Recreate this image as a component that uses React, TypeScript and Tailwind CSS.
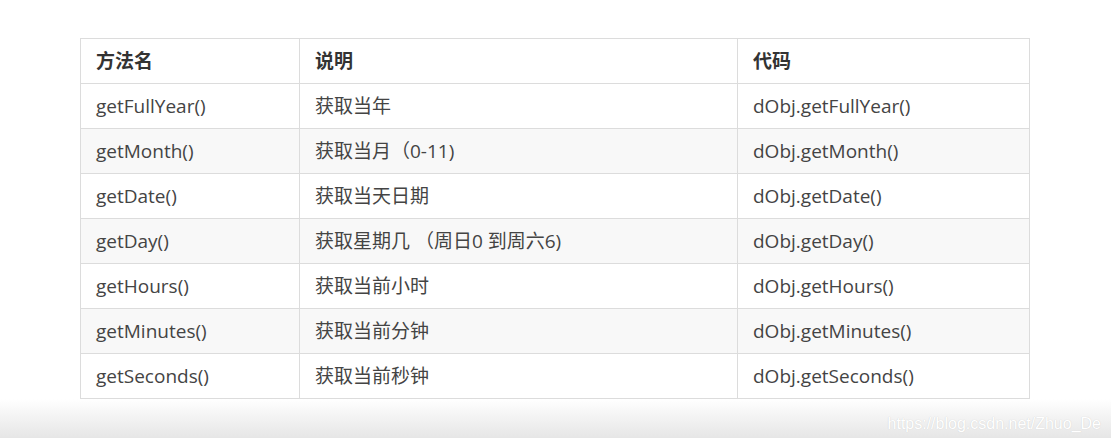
const rows = [
	{ name: "getFullYear()", desc: "获取当年", code: "dObj.getFullYear()" },
	{ name: "getMonth()", desc: "获取当月（0-11)", code: "dObj.getMonth()" },
	{ name: "getDate()", desc: "获取当天日期", code: "dObj.getDate()" },
	{ name: "getDay()", desc: "获取星期几 （周日0 到周六6)", code: "dObj.getDay()" },
	{ name: "getHours()", desc: "获取当前小时", code: "dObj.getHours()" },
	{ name: "getMinutes()", desc: "获取当前分钟", code: "dObj.getMinutes()" },
	{ name: "getSeconds()", desc: "获取当前秒钟", code: "dObj.getSeconds()" },
];

const App = () => {
	return (
		<div
			className="w-[1111px] h-[438px] overflow-hidden bg-white flex flex-col text-[#444]"
			style={{ fontFamily: '"Open Sans", "Noto Sans CJK SC", sans-serif' }}
		>
			<div className="h-[38px] shrink-0" />
			<div className="pl-[80px]">
				<table className="table-fixed border-collapse w-[949px] text-[19px] leading-none">
					<colgroup>
						<col className="w-[219px]" />
						<col className="w-[438px]" />
						<col className="w-[292px]" />
					</colgroup>
					<thead>
						<tr className="h-[45px] bg-white">
							<th className="border border-[#dcdcdc] text-left font-bold px-[15px] text-[#333]">方法名</th>
							<th className="border border-[#dcdcdc] text-left font-bold px-[15px] text-[#333]">说明</th>
							<th className="border border-[#dcdcdc] text-left font-bold px-[15px] text-[#333]">代码</th>
						</tr>
					</thead>
					<tbody>
						{rows.map((row, idx) => (
							<tr key={idx} className={`h-[45px] ${idx % 2 === 1 ? "bg-[#f8f8f8]" : "bg-white"}`}>
								<td className="border border-[#dcdcdc] px-[15px]">{row.name}</td>
								<td className="border border-[#dcdcdc] px-[15px]">{row.desc}</td>
								<td className="border border-[#dcdcdc] px-[15px]">{row.code}</td>
							</tr>
						))}
					</tbody>
				</table>
			</div>
			<div className="flex-1 bg-gradient-to-b from-white to-[#e6e6e6] flex justify-end items-center pr-[10px] pt-[10px]">
				<span
					className="text-white text-[16px] [text-shadow:0_0_1px_#c8c8c8]"
					style={{ fontFamily: '"Liberation Sans", Arial, sans-serif' }}
				>
					https://blog.csdn.net/Zhuo_De
				</span>
			</div>
		</div>
	);
};

export default App;
